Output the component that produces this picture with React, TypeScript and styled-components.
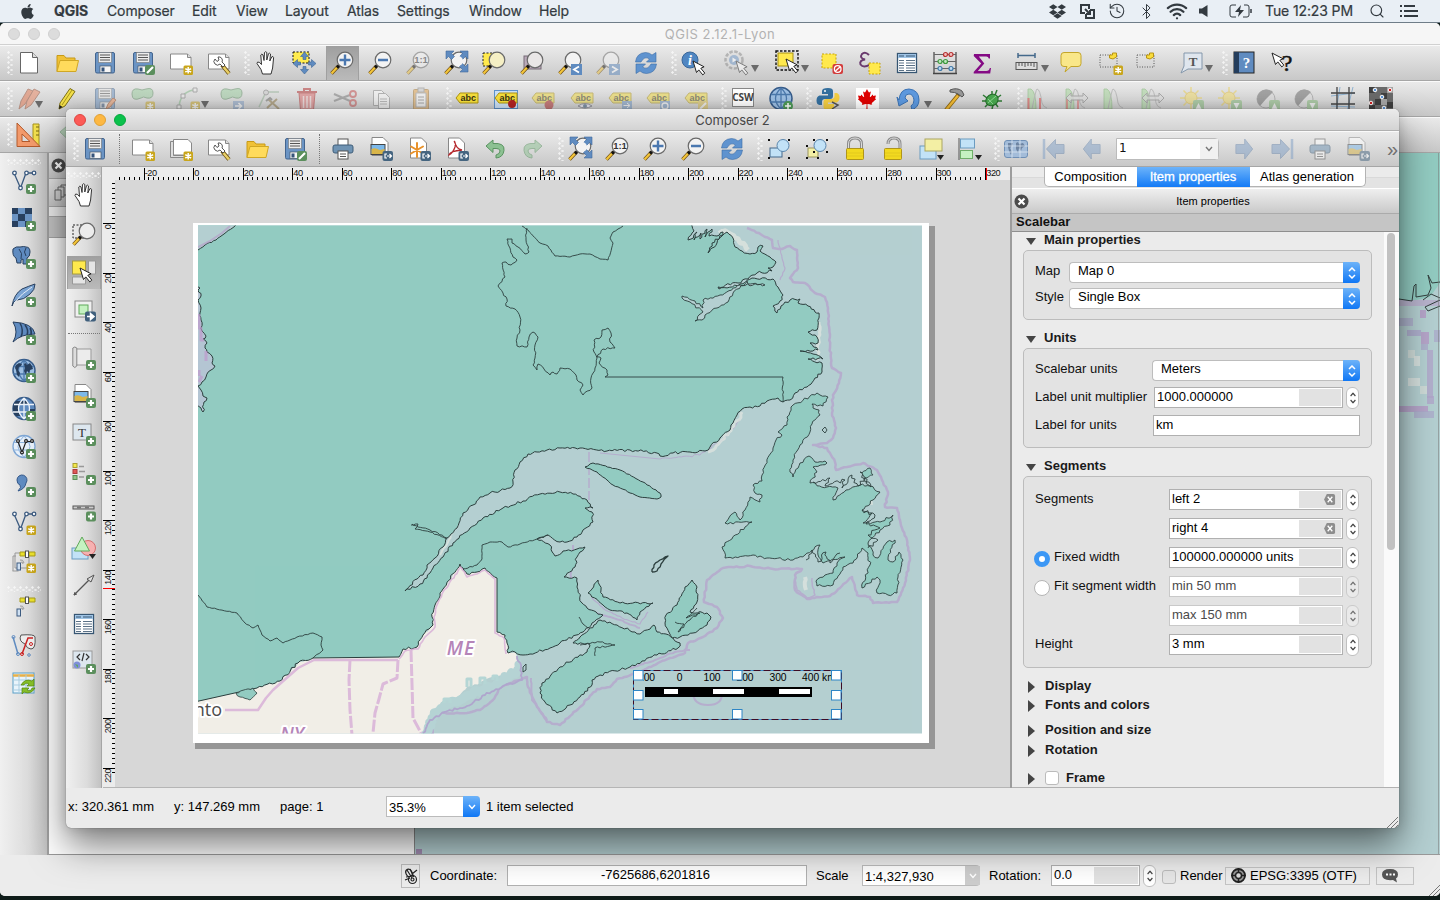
import React from "react";
import styled, { createGlobalStyle, css } from "styled-components";
import { FaApple, FaDropbox, FaCanadianMapleLeaf } from "react-icons/fa";
import { Bluetooth, History, Search, Wifi } from "lucide-react";

const Global = createGlobalStyle`
  * { box-sizing: border-box; }
  body {
    margin: 0;
    overflow: hidden;
    background: #0f1c19;
    font: 13px/16px "Liberation Sans", Arial, sans-serif;
    color: #111;
  }
  svg { display: block; }
`;

/* ---------- shared shapes used by the icons ---------- */

const PlusBadge = () => (
  <g>
    <rect x="14" y="14" width="10" height="10" rx="2" fill="#5b8f5d" />
    <path d="M19 16v6M16 19h6" stroke="#fff" strokeWidth="2.200" />
  </g>
);
const StarBadge = () => (
  <g>
    <rect x="14.500" y="14.500" width="9.500" height="9.500" rx="1.500" fill="#c9a61c" />
    <path d="M19.200 16v6.600M16.300 17.600l5.800 3.400M22.100 17.600l-5.800 3.400" stroke="#fff" strokeWidth="1.500" />
  </g>
);
const ArrowBadge = () => (
  <g>
    <rect x="13.500" y="14" width="10.500" height="10" rx="2" fill="#456580" />
    <path d="M18 17h-2v4h2M18 19h4M20.500 17l2 2l-2 2" stroke="#fff" strokeWidth="1.200" fill="none" />
  </g>
);
const Sheet = () => <path d="M3.500 1h11l5 5v15h-16z" fill="#fff" stroke="#888" />;
const WideSheet = () => (
  <g>
    <path d="M1.500 3h17l3.500 3.500v11.500h-20.500z" fill="#fff" stroke="#888" />
    <path d="M18.500 3v3.500h3.500" fill="#ddd" stroke="#888" />
  </g>
);
const Disk = () => (
  <g>
    <rect x="2.500" y="1.500" width="19" height="20.500" rx="1.500" fill="#6b94c4" stroke="#43658f" />
    <rect x="5.500" y="1.500" width="13" height="10" fill="#ececec" stroke="#777" strokeWidth=".6" />
    <path d="M7 4h10M7 6.500h10M7 9h10" stroke="#555" />
    <rect x="7" y="15" width="11" height="6.500" fill="#f5f5f5" stroke="#456" strokeWidth=".7" />
    <rect x="8.500" y="16.500" width="3" height="4" fill="#35537a" />
  </g>
);
const Lens = ({ fill = "#f3f3f3" }: { fill?: string }) => (
  <g>
    <path d="M1.500 22.500l7-7.500" stroke="#6b4b12" strokeWidth="3.400" />
    <path d="M1.500 22.500l6-6.500" stroke="#f3c53a" strokeWidth="2.200" />
    <path d="M7 16.800l2-2.200" stroke="#111" strokeWidth="3" />
    <circle cx="15" cy="9" r="7.800" fill={fill} stroke="#6a6a6a" strokeWidth="1.200" />
  </g>
);
const Folder = () => (
  <g>
    <path d="M2 20.500v-16h7l2 2.500h9v3" fill="#f0c136" stroke="#c79a17" />
    <path d="M2 20.500l3-11h18.500l-2.500 11z" fill="#ffdb5c" stroke="#d0a724" />
  </g>
);
const Wrench = () => (
  <g>
    <path d="M15 14l7 8.500" stroke="#6a5012" strokeWidth="4" />
    <path d="M16.500 16l5.500 6.500" stroke="#e8cf66" strokeWidth="2.500" />
    <path d="M8 8a3.500 3.500 0 0 0 5 5l3 3l2-2l-3-3a3.500 3.500 0 0 0-4-5l1 3l-2 1.500z" fill="#fff" stroke="#444" strokeWidth=".9" />
  </g>
);
const Cursor = ({ x = 10, y = 9 }: { x?: number; y?: number }) => (
  <path transform={`translate(${x} ${y})`} d="M0 0l3.500 11.500l2.300-2.600l4 5l2-1.800l-4-4.800l3.300-1.500z" fill="#fff" stroke="#222" />
);
const Hand = () => (
  <path
    d="M8.500 23L7 18.500L3 12.500q0-2.200 2.200-1.200L7.500 13.500L6.800 4q1-1.800 2.200 0l1 5.500l.5-8q1.200-1.600 2.300 0v7.500l1.700-6.300q1.300-1.200 2 .3l-.7 7l2-4.200q1.500-.8 1.800.8l-1 10.400L17 23z"
    fill="#fff"
    stroke="#333"
    strokeLinejoin="round"
  />
);
const Refresh = () => (
  <g fill="#5f93cf" stroke="#3b6ca6" strokeWidth=".6">
    <path d="M1.500 11q1-9 10-9.500q4 0 6.500 2.500l4-2.500v9.500h-9.500l3-3q-5-3.500-8.500 3z" />
    <path d="M22.500 13q-1 9-10 9.500q-4 0-6.500-2.500l-4 2.500v-9.500h9.500l-3 3q5 3.500 8.500-3z" />
  </g>
);
const Arrows4 = () => (
  <g fill="#5f8bc0" stroke="#40699b" strokeWidth=".6">
    <path d="M2 0h8l-2.500 2.500l3 3l-3 3l-3-3L2 8z" />
    <path d="M24 0h-8l2.500 2.500l-3 3l3 3l3-3L24 8z" />
    <path d="M24 21h-8l2.500-2.500l-3-3l3-3l3 3L24 13z" />
  </g>
);
const Globe = ({ dark = false }: { dark?: boolean }) => (
  <g fill="none">
    <circle cx="12" cy="11.500" r="11" fill={dark ? "#5f8bc0" : "#9dbfe3"} stroke="#375c8a" strokeWidth="1.500" />
    {dark && <path d="M1 12q0-6 3-8h5q-3 4-3 8zM23 12q0 6-4 8h-5q4-4 4-8zM9 4h6l2 4h-10zM6 12h-5q0 5 3 7h5q-3-3-3-7z" fill="#28405f" />}
    <path d="M2 7.500h20M1 15h22M12 1v21M12 1q-11 10.500 0 21M12 1q11 10.500 0 21" stroke={dark ? "#eef4fb" : "#4c79ac"} strokeWidth="1.300" />
  </g>
);
const Continents = () => (
  <g fill="#28405f">
    <path d="M4 6l3-2l3 1l-1 2l-2 1l-1 3l2 3l-1 4l-2-2l-1-5l-1-2zM12 5l2-1l1 2l3-2l2 3l1 3l-3 1l-1 3l-2-2l-1 4l-2-4l1-3z" />
  </g>
);
const Tag = () => (
  <g>
    <path d="M1 11l4-5h18v10h-18z" fill="#f6df3c" stroke="#b09512" />
    <text x="5.500" y="14.300" fontSize="9" fontWeight="700" fontFamily="Liberation Sans, sans-serif" fill="#3a3410">abc</text>
  </g>
);
const Blob = () => (
  <path d="M1 7q0-6 6-5q4 2 8 0q7-2 7 4q0 6-6 5q-4-2-6 0q-9 4-9-4z" fill="#9bcf9f" stroke="#5d8d62" />
);
const VNodes = () => (
  <g fill="#fff" stroke="#3c5b80" strokeWidth="1.300">
    <path d="M2 3l6.500 15l5.500-15h8" fill="none" />
    <circle cx="2.500" cy="3" r="1.800" />
    <circle cx="8.500" cy="18" r="1.800" />
    <circle cx="14.500" cy="3" r="1.800" />
    <circle cx="22" cy="3" r="1.800" />
  </g>
);
const PenFull = () => (
  <g>
    <path d="M4 22l1-6L15 1.500l5 3L10 19z" fill="#f4e04a" stroke="#7d7018" />
    <path d="M7 18L17 3" stroke="#a8961c" />
    <path d="M4 22l.6-4l3 2z" fill="#222" />
  </g>
);
const TableIcon = () => (
  <g>
    <rect x="2.500" y="2.500" width="19" height="19" fill="#fff" stroke="#375673" strokeWidth="1.300" />
    <rect x="3" y="3" width="18" height="4" fill="#9fc4e6" />
    <path d="M4 5h5M11 5h9" stroke="#375673" />
    <path d="M4 9.500h5M11 9.500h9M4 12h5M11 12h9M4 14.500h5M11 14.500h9M4 17h5M11 17h9M4 19.500h5M11 19.500h9" stroke="#5b7186" />
  </g>
);
const Picture = () => (
  <g>
    <path d="M3 .500h11l5 5v13h-16z" fill="#fff" stroke="#888" />
    <rect x="2" y="7.500" width="14" height="10" fill="#7db9ea" stroke="#444" />
    <path d="M2.500 12q4-2 8 1l5-1v5h-13z" fill="#d9b548" />
  </g>
);
const Printer = () => (
  <g stroke="#555">
    <rect x="7" y="2" width="10" height="8" fill="#fff" />
    <rect x="2" y="8" width="20" height="8" rx="2" fill="#6f93b3" stroke="#3f5d78" />
    <rect x="7" y="14" width="10" height="8" fill="#fff" />
    <path d="M9 17h6M9 19.500h6" />
  </g>
);
const Undo = () => <path d="M3 9l7-6v3.500q12-1 11 7q-1 7-8 7.500v-3q4-1 4-4q0-3-7-2.500v4z" fill="#8cc192" stroke="#5a9361" />;
const Lock = ({ open = false }: { open?: boolean }) => (
  <g>
    <path d={open ? "M7 7q0-6 6-6q6 0 6 6v4" : "M5.500 12v-5q0-6 6.500-6t6.500 6v5"} fill="none" stroke="#8a8a8a" strokeWidth="3" />
    <path d={open ? "M7 7q0-6 6-6q6 0 6 6v4" : "M5.500 12v-5q0-6 6.500-6t6.500 6v5"} fill="none" stroke="#ddd" strokeWidth="1" />
    <rect x="3.500" y="11.500" width="17" height="11" rx="1" fill="#f2d91f" stroke="#b0951a" />
    <path d="M4 16h16M4 19h16" stroke="#e3c91e" />
  </g>
);
const Handles = () => (
  <path d="M1 2h2v2h-2zM21 2h2v2h-2zM1 20h2v2h-2zM21 20h2v2h-2z" fill="#111" />
);
const Caret = () => <path d="M17 18h7l-3.500 5z" fill="#222" />;
const BlueArrow = () => <path d="M1 12l10-10v5.500h11v9h-11v5.500z" fill="#7f9fc6" stroke="#6684aa" />;
const Histogram = () => (
  <g>
    <path d="M1 22V2h3q5 3 5 20z" fill="#a7d99b" stroke="#6dae60" strokeWidth=".8" />
    <path d="M5 22q4-20 5-20q3 0 5 14q1 4 5 5" fill="none" stroke="#999" />
  </g>
);
const Sun = () => (
  <g>
    <path d="M11 0v22M0 11h22M3.500 3.500l15 15M18.500 3.500l-15 15" stroke="#eccf49" strokeWidth="1.500" />
    <circle cx="11" cy="11" r="6" fill="#f7de66" stroke="#e2bd3a" />
  </g>
);
const Contrast = () => (
  <g>
    <circle cx="10" cy="12" r="9" fill="#ddd" stroke="#888" />
    <path d="M10 12L17 5A9 9 0 1 0 4 19z" fill="#666" />
  </g>
);
const UpBadge = ({ down = false }: { down?: boolean }) => (
  <g>
    <rect x="13" y="13" width="11" height="11" rx="2" fill="#82bb76" />
    <path d={down ? "M15.500 16h6l-3 6z" : "M15.500 22h6l-3-6z"} fill="#fff" />
  </g>
);
const Satellite = () => (
  <g>
    <path d="M8 3h5v4h-5zM17 3h6v4h-6z" fill="#eae02c" stroke="#a79b1a" />
    <rect x="13.500" y="2" width="3" height="6.500" fill="#fff" stroke="#555" />
    <path d="M8 11q3-1 4 3M9 13q2 0 2 2" fill="none" stroke="#999" />
    <rect x="5" y="14" width="3.500" height="7" fill="#cfe0f2" stroke="#3c5b80" />
  </g>
);

const icons: Record<string, React.ReactNode> = {
  newFile: (<g><path d="M3.500 1.500h12l5 5v15.500h-17z" fill="#fff" stroke="#666" /><path d="M15.500 1.500v5h5" fill="#ddd" stroke="#666" /></g>),
  folder: <Folder />,
  disk: <Disk />,
  diskEdit: (<g><Disk /><rect x="14" y="14" width="10" height="10" rx="2" fill="#5b8f5d" /><path d="M16 22l6-6" stroke="#fff" strokeWidth="2.200" /></g>),
  newComposer: (<g><WideSheet /><StarBadge /></g>),
  dupComposer: (<g><path d="M1.500 4.500h3v14h15v2h-18z" fill="#ddd" stroke="#888" /><path d="M4.500 2.500h14.500l3.500 3.500v12h-18z" fill="#fff" stroke="#888" /><StarBadge /></g>),
  wrench: (<g><WideSheet /><Wrench /></g>),
  hand: <Hand />,
  panSelection: (
    <g><rect x="1" y="1" width="16" height="11" fill="#ffec4f" stroke="#111" strokeDasharray="2 1.500" />
      <g fill="#5f8bc0" stroke="#3c6595" strokeWidth=".6"><path d="M12.500 1l4 4.500h-2.500v3h-3v-3h-2.500zM12.500 23l4-4.500h-2.500v-3h-3v3h-2.500zM1 12.500l4.500-4v2.500h3v3h-3v2.500zM24 12.500l-4.500-4v2.500h-3v3h3v2.500z" /></g></g>
  ),
  zoomIn: (<g><Lens /><path d="M15 3.500v11M9.500 9h11" stroke="#4b78b0" strokeWidth="2.400" /></g>),
  zoomOut: (<g><Lens /><path d="M10 9h10" stroke="#4b78b0" strokeWidth="2.400" /></g>),
  zoom11: (<g><Lens /><text x="15" y="12.300" textAnchor="middle" fontSize="9.500" fontWeight="700" fontFamily="Liberation Sans, sans-serif" fill="#333">1:1</text></g>),
  zoomFull: (<g><Lens /><Arrows4 /><circle cx="14" cy="10" r="5" fill="#f3f3f3" /></g>),
  zoomSel: (<g><rect x="1" y="2" width="12" height="13" fill="#ffe94d" stroke="#222" strokeDasharray="2 1.500" /><Lens fill="#f5efc4" /></g>),
  zoomLayer: (<g><rect x="4" y="5" width="17" height="13" fill="#b9a9b9" stroke="#776b77" /><Lens fill="#e9e6e6" /></g>),
  zoomLast: (<g><Lens /><rect x="13" y="13" width="11" height="11" fill="#5f8bc0" /><path d="M21 15.500l-5 3l5 3" stroke="#fff" strokeWidth="1.800" fill="none" /></g>),
  zoomNext: (<g><Lens /><rect x="13" y="13" width="11" height="11" fill="#5f8bc0" /><path d="M16 15.500l5 3l-5 3" stroke="#fff" strokeWidth="1.800" fill="none" /></g>),
  zoomBox: (<g><rect x="1" y="3" width="13" height="13" fill="none" stroke="#222" strokeDasharray="2 1.500" /><Lens fill="#ececec" /></g>),
  refresh: <Refresh />,
  identify: (<g><circle cx="9" cy="9" r="8" fill="#4f86c2" stroke="#3a6799" /><text x="7" y="14" fontSize="14" fontStyle="italic" fontWeight="700" fontFamily="Liberation Serif, serif" fill="#fff">i</text><Cursor x={12} y={10} /></g>),
  action: (<g><circle cx="10" cy="9" r="8.500" fill="#ddd" stroke="#888" strokeDasharray="3.500 1.500" strokeWidth="2.500" /><circle cx="10" cy="9" r="5" fill="#6b94c4" /><path d="M8.500 6.500l4 2.500l-4 2.500z" fill="#fff" /><Cursor x={12} y={10} /></g>),
  select: (<g><rect x="0" y="0" width="22" height="19" fill="none" stroke="#111" strokeWidth="1.400" strokeDasharray="2.500 1.500" /><rect x="2" y="2" width="15" height="13" fill="#ffe94d" stroke="#a89210" /><Cursor x={10} y={8} /></g>),
  deselect: (<g><rect x="2" y="3" width="14" height="14" fill="#ffe94d" stroke="#c5a30f" strokeDasharray="2 1.500" /><rect x="12.500" y="13" width="10.500" height="10" rx="2" fill="#d33b3b" /><circle cx="17.700" cy="18" r="3.300" fill="none" stroke="#fff" strokeWidth="1.300" /><path d="M15.500 20l4.500-4" stroke="#fff" strokeWidth="1.300" /></g>),
  expression: (<g><path d="M11 4q-4-4-7-1q-3 4 3 5.500q-6 1-4.500 5q3 4 9.500 0" fill="none" stroke="#6a3a6e" strokeWidth="2" /><rect x="11" y="12" width="11" height="11" fill="#ffe94d" stroke="#c5a30f" strokeDasharray="2 1.500" /></g>),
  table: <TableIcon />,
  abacus: (
    <g fill="none"><path d="M1 1v21M23 1v21" stroke="#444" strokeWidth="1.200" /><path d="M0 22.500h24" stroke="#444" strokeWidth="1.600" /><path d="M1 3.500h22M1 10.500h22M1 17.500h22" stroke="#666" />
      <g strokeWidth="1.200"><circle cx="12.500" cy="3.500" r="2" fill="#f3bcbc" stroke="#b63030" /><circle cx="18" cy="3.500" r="2" fill="#f3bcbc" stroke="#b63030" /><circle cx="7" cy="10.500" r="2" fill="#bfe8bf" stroke="#3f9a3f" /><circle cx="12.500" cy="10.500" r="2" fill="#bfe8bf" stroke="#3f9a3f" /><circle cx="7" cy="17.500" r="2" fill="#bfdcf2" stroke="#3f78a8" /><circle cx="18" cy="17.500" r="2" fill="#bfdcf2" stroke="#3f78a8" /></g></g>
  ),
  sigma: <path d="M3 3h16v4.500h-1.200q-.5-2-2.500-2h-7.500l5.500 7l-6.500 7.500h8.500q3 0 3.500-3h1.200l-.8 5.500h-16.500v-1.500l7.500-8.500l-7.500-7.500z" fill="#840a84" />,
  measure: (<g><path d="M3 4.500h17M3 2v5M20 2v5" stroke="#44698b" strokeWidth="1.500" /><rect x="1" y="11.500" width="21" height="7" fill="#ddd" stroke="#555" /><path d="M4 12v3M7 12v3M10 12v4M13 12v3M16 12v3M19 12v4" stroke="#555" /></g>),
  tip: <path d="M5 1.500h14q3 0 3 3v8q0 3-3 3h-7l-6 5.500l2-5.500h-3q-3 0-3-3v-8q0-3 3-3z" fill="#f9e789" stroke="#c3a52a" />,
  bookmarkNew: (<g><rect x="1" y="4" width="17" height="12" fill="none" stroke="#555" strokeDasharray="1 1.500" /><path d="M10.500 4h3v-2h4v4l-3.500 2l-3.500-1z" fill="#f9dc3c" stroke="#b89414" /><StarBadge /></g>),
  bookmark: (<g><rect x="1" y="4" width="17" height="12" fill="none" stroke="#555" strokeDasharray="1 1.500" /><path d="M10.500 4h3v-2h4v4l-3.500 2l-3.500-1z" fill="#f9dc3c" stroke="#b89414" /></g>),
  textNote: (<g><path d="M5 2h18v16h-14l-7 4l3-7z" fill="#dfe6ee" stroke="#8497ab" /><text x="14" y="14.500" textAnchor="middle" fontSize="13" fontFamily="Liberation Serif, serif" fontWeight="700" fill="#555">T</text></g>),
  help: (<g><rect x="2" y="1" width="20" height="21" fill="#5f8bc0" stroke="#222" /><path d="M2 1h5v21h-5z" fill="#243d5c" /><text x="14.500" y="16.500" textAnchor="middle" fontSize="15" fontWeight="700" fontFamily="Liberation Serif, serif" fill="#fff">?</text></g>),
  whatsThis: (<g><Cursor x={3} y={2} /><text x="18" y="20" textAnchor="middle" fontSize="24" fontFamily="Liberation Serif, serif" fill="#111" stroke="#111" strokeWidth=".5">?</text></g>),
  pencils: (<g><path d="M1 22l2-8L10 2l5 2L7 17z" fill="#e0714a" stroke="#93492e" /><path d="M7 22l2-8L16 2l6 3L13 18z" fill="#e8835e" stroke="#93492e" /></g>),
  pencil: <PenFull />,
  diskPencil: (<g><Disk /><path d="M13 22l2-5l5-6l3 2l-6 7z" fill="#f0955f" stroke="#a34d1f" /></g>),
  blobStar: (<g><Blob /><StarBadge /></g>),
  nodeStar: (<g><path d="M3 22q0-16 14-19" fill="none" stroke="#7fb685" strokeWidth="1.500" /><path d="M1 18h4v4h-4zM5 7h4v4h-4zM17 1h4v4h-4z" fill="#eee" stroke="#777" /><StarBadge /></g>),
  blobArrow: (<g><Blob /><rect x="13" y="14" width="11" height="10" fill="#7d9cc4" /><path d="M15 19h6M18.500 16l3 3l-3 3" stroke="#fff" strokeWidth="1.500" fill="none" /></g>),
  nodeTool: (<g><path d="M1 20l7-15h13" fill="none" stroke="#8fae91" strokeWidth="1.500" /><circle cx="8" cy="5.500" r="2.500" fill="#ccc" stroke="#777" /><path d="M9 21l10-9M10 12l11 10" stroke="#8b7440" strokeWidth="2" /><path d="M8 14l4-3l2 2" stroke="#666" fill="none" strokeWidth="2" /></g>),
  trash: (<g stroke="#b02a2a"><path d="M4 6h16l-1.500 17h-13z" fill="#dd6c6c" /><path d="M2 5h20M9 4v-2h6v2" fill="none" strokeWidth="2" /><path d="M8.500 9v12M12 9v12M15.500 9v12" stroke="#f6d7d7" strokeWidth="1.500" /></g>),
  cut: (<g fill="none"><path d="M1 7l16 7M1 14l16-6" stroke="#777" strokeWidth="2" /><circle cx="20" cy="7" r="3" stroke="#c44c4c" strokeWidth="1.800" /><circle cx="20" cy="16" r="3" stroke="#c44c4c" strokeWidth="1.800" /></g>),
  copy: (<g><path d="M3.500 3.500h8l3 3v12h-11z" fill="#fff" stroke="#888" /><path d="M8.500 6.500h7l4 4v11h-11z" fill="#fff" stroke="#888" /><path d="M10 12h7M10 14.500h7M10 17h7" stroke="#999" /></g>),
  paste: (<g><rect x="4.500" y="2.500" width="15" height="20" rx="1" fill="#e4a44c" stroke="#a8772f" /><rect x="9" y="1" width="6" height="4" fill="#ccc" stroke="#888" /><path d="M7 6h10v14h-10z" fill="#fff" stroke="#999" /><path d="M9 10h6M9 13h6M9 16h6" stroke="#777" /></g>),
  tag: <Tag />,
  tagPinBox: (<g><rect x=".5" y="3.500" width="23" height="18" fill="#cde2f6" stroke="#5f93cc" /><Tag /><circle cx="18" cy="17" r="4" fill="#b32424" /></g>),
  tagPin: (<g><Tag /><circle cx="18" cy="18" r="4.500" fill="#b32424" /></g>),
  tagEye: (<g><Tag /><path d="M8 19q7-5 14 0q-7 4-14 0z" fill="#eef" stroke="#556" /><circle cx="15" cy="19" r="2" fill="#357" /></g>),
  tagMove: (<g><Tag /><rect x="14" y="14" width="10" height="10" fill="#6b94c4" /><path d="M15.500 18.500h6M19 16l3 2.500l-3 2.500" stroke="#fff" fill="none" /></g>),
  tagRotate: (<g><Tag /><rect x="14" y="14" width="10" height="10" fill="#6b94c4" /><circle cx="19" cy="19" r="3" fill="none" stroke="#fff" strokeWidth="1.300" /></g>),
  tagEdit: (<g><Tag /><rect x="14" y="14" width="10" height="10" fill="#e0c14a" /><path d="M16 22l6-6" stroke="#fff" strokeWidth="2" /></g>),
  csw: (<g><rect x="1.500" y="1.500" width="21" height="18" fill="#fff" stroke="#888" /><text x="12" y="13.500" textAnchor="middle" fontSize="10" fontWeight="700" fontFamily="Open Sans, sans-serif" fill="#444">CSW</text></g>),
  globePlus: (<g><Globe /><circle cx="19" cy="19" r="5" fill="#4f9a58" /><path d="M19 16v6M16 19h6" stroke="#fff" strokeWidth="1.500" /></g>),
  python: (<g><path d="M12 1q-6 0-6 3v3h6v1.500h-8.500q-3 1-3 5t3 4.500h2.500v-3q0-3 3-3h5q3 0 3-3v-5q0-3-5-3z" fill="#35709f" /><path d="M12 23q6 0 6-3v-3h-6v-1.500h8.500q3-1 3-5t-3-4.500h-2v3q0 3-3 3h-5q-3 0-3 3v5q0 3 4.500 3z" fill="#f5cf42" /><circle cx="9" cy="4" r="1" fill="#fff" /><path d="M16 15l6 3l-6 4" fill="none" stroke="#555" strokeWidth="1.500" /></g>),
  undoBlue: <path d="M2 13q1-11 10-11q10 1 10 11q0 7-7 10l-1-4q3-2 3-6q-1-6-5-6q-4 0-4 4l3 3l-9 5l-2-9z" fill="#5e9ae0" stroke="#3c74b6" />,
  hammer: (<g><path d="M5 23L18 7" stroke="#8a6410" strokeWidth="4" /><path d="M5 23L17 8.500" stroke="#f2bb35" strokeWidth="2.500" /><path d="M9 3q7-3 12 1l2 4l-2 2l-4-3q-3-2-8-2z" fill="#999" stroke="#555" /></g>),
  bug: (<g><path d="M3 8l4 3M2 14h4M5 20l3-3M12 4v3M17 3l-2 5M21 8l-4 3M22 14h-5M12 22l1-4M18 20l-3-4" stroke="#2f7c35" strokeWidth="1.500" /><ellipse cx="12" cy="13" rx="6.500" ry="5.500" fill="#49a94f" stroke="#236b29" transform="rotate(-35 12 13)" /><path d="M8 16l8-7M8 12l5 5" stroke="#8fdc93" /></g>),
  hist1: (<g><Histogram /><path d="M1.500 11v11M13 11v11" stroke="#e03c3c" strokeWidth="2" /></g>),
  hist2: (<g><Histogram /><path d="M2 12v10M13 12v10" stroke="#e03c3c" strokeWidth="1.500" /><path d="M1 11l5-5v3h12v-3l5 5l-5 5v-3h-12v3z" fill="#ddd" fillOpacity=".8" stroke="#777" /></g>),
  hist3: <Histogram />,
  hist4: (<g><Histogram /><path d="M1 11l5-5v3h12v-3l5 5l-5 5v-3h-12v3z" fill="#ddd" fillOpacity=".6" stroke="#777" /></g>),
  sunUp: (<g><Sun /><UpBadge /></g>),
  sunDown: (<g><Sun /><UpBadge down /></g>),
  contrastUp: (<g><Contrast /><UpBadge /></g>),
  contrastDown: (<g><Contrast /><UpBadge down /></g>),
  fence: (<g><path d="M9 0q-2 12-4 24M22 0q-3 12-6 24M0 9l24-3M0 19l24 1" stroke="#8fb2d0" strokeWidth="1" /><path d="M6 0v24M18 0v24M0 6h24M0 17h24" stroke="#444" strokeWidth="1.300" /></g>),
  georef: (<g><rect width="24" height="24" fill="#6a6a6a" /><path d="M0 0h6v6h-6zM12 6h6v6h-6zM6 12h6v6h-6zM0 18h6v6h-6zM18 15h6v6h-6z" fill="#3f3f3f" /><path d="M12 12h6v6h-6zM18 0h6v6h-6z" fill="#a5a5a5" /><g stroke="#fff"><circle cx="6" cy="3" r="1.800" fill="#5d94d6" /><circle cx="21" cy="3" r="1.800" fill="#c22" /><circle cx="13" cy="10" r="1.800" fill="#5d94d6" /><circle cx="2" cy="16" r="1.800" fill="#c22" /><circle cx="15" cy="21" r="1.800" fill="#5d94d6" /></g></g>),
  ruler: (<g><path d="M17 1h6v22h-6z" fill="#f3e04f" stroke="#a8931c" /><path d="M20 4h3M20 8h3M20 12h3" stroke="#776712" /><path d="M1 0L24 23.500H1z" fill="#f39a6b" stroke="#b35a2c" /><path d="M6 11l8 7.500h-8z" fill="#ddd" stroke="#b35a2c" /></g>),
  undo: <Undo />,
  redo: <g transform="translate(24 0) scale(-1 1)"><Undo /></g>,
  printer: <Printer />,
  exportImg: (<g><Picture /><ArrowBadge /></g>),
  exportSvg: (<g><Sheet /><path d="M10 6v14M4 9.500l12 7M16 9.500l-12 7" stroke="#e8922c" strokeWidth="2" strokeLinecap="round" /><ArrowBadge /></g>),
  exportPdf: (<g><Sheet /><path d="M9 4q2 2 1 6q-2 6-6 8q1-4 13-5q-6-1-7.500-9" fill="none" stroke="#b5282d" strokeWidth="1.300" /><ArrowBadge /></g>),
  group: (<g><rect x="3" y="11" width="12" height="9" fill="#c2e2f7" stroke="#44698b" /><circle cx="16" cy="8.500" r="6" fill="#c2e2f7" stroke="#5a86ad" /><Handles /></g>),
  ungroup: (<g><rect x="3" y="11" width="10" height="9" fill="#f3efa4" stroke="#9b9660" /><circle cx="15" cy="8.500" r="6" fill="#c2e2f7" stroke="#5a86ad" /><path d="M1 8h2v2h-2zM1 20h2v2h-2zM12 20h2v2h-2zM8 2h2v2h-2zM21 2h2v2h-2zM21 14h2v2h-2zM8 14h2v2h-2z" fill="#111" /></g>),
  lock: <Lock />,
  unlock: <Lock open />,
  raise: (<g><rect x="0" y="9" width="16" height="13" fill="#c2e2f7" stroke="#6b9bc0" /><rect x="5" y="2" width="17" height="12" fill="#f3efa4" stroke="#aba661" /><Caret /></g>),
  align: (<g><path d="M1 1v22" stroke="#555" /><rect x="2.500" y="2" width="14" height="9" fill="#c2e2f7" stroke="#6b9bc0" /><rect x="2.500" y="13.500" width="12" height="8" fill="#c5f2c1" stroke="#6fae69" /><Caret /></g>),
  worldmap: (<g><rect x=".5" y="3.500" width="23" height="17" rx="2.500" fill="#a3bcd9" stroke="#6f8fb5" /><path d="M4 6h5l-1 3l-2 2l1 2l1 2l-1 3l-2-4l-1-4zM12 6l2-1l1 2l4-1l2 3l-3 2l-1 3l-2-3l-1 5l-2-4z" fill="#6d84a2" /><path d="M0 9h24M0 15h24M8 3v18M16 3v18" stroke="#dce7f3" strokeWidth=".8" /></g>),
  first: (<g><path d="M2 2v20" stroke="#7f9fc6" strokeWidth="2.500" /><path d="M4.500 12l9-9.500v5h8.500v9h-8.500v5z" fill="#7f9fc6" stroke="#6684aa" /></g>),
  prev: <g transform="translate(2.500 0) scale(.8 1)"><BlueArrow /></g>,
  next: <g transform="translate(21.500 0) scale(-.8 1)"><BlueArrow /></g>,
  last: (<g transform="translate(24 0) scale(-1 1)"><path d="M2 2v20" stroke="#7f9fc6" strokeWidth="2.500" /><path d="M4.500 12l9-9.500v5h8.500v9h-8.500v5z" fill="#7f9fc6" stroke="#6684aa" /></g>),
  vector: (<g><VNodes /><PlusBadge /></g>),
  raster: (<g><rect y="1" width="20" height="19" fill="#6b94c4" /><path d="M0 1h6v6h-6zM13 1h7v6h-7zM6 7h7v7h-7zM0 14h6v6h-6zM13 14h7v6h-7z" fill="#28405f" /><PlusBadge /></g>),
  postgis: (<g><path d="M1 4q3-3 7-2q4-1 6 0q4 0 4 5q0 5-3 6v6h-4v-5l-2 1v3h-4l-1-5q-4-2-3-9z" fill="#5f8bc0" stroke="#28405f" /><path d="M7 4q4 4 2 10M14 3q-3 4 0 8" stroke="#28405f" fill="none" /><PlusBadge /></g>),
  feather: (<g><path d="M0 23q2-12 10-17q7-3 13-5q0 6-5 10q-6 6-13 6q-4 1-5 6z" fill="#7ba4d3" stroke="#28405f" /><path d="M2 20Q10 10 20 4" stroke="#e3edf7" fill="none" /><PlusBadge /></g>),
  mssql: (<g><path d="M1 1q20 1 22 12q-14 0-22 8q6-10 0-20z" fill="#5f8bc0" stroke="#28405f" /><path d="M8 2q4 7 1 14M13 4q4 5 2 10M18 7q2 3 1 7" stroke="#28405f" strokeWidth="1.500" fill="none" /><PlusBadge /></g>),
  wms: (<g><Globe /><Continents /><PlusBadge /></g>),
  wcs: (<g><Globe dark /><PlusBadge /></g>),
  wfs: (<g><circle cx="12" cy="11.500" r="11" fill="#e7f0fa" stroke="#7ea6d4" strokeWidth="1.300" /><path d="M2 7.500h20M1 15h22M12 1q-12 10.500 0 21M12 1q12 10.500 0 21" stroke="#8fb4dd" fill="none" /><g fill="#fff" stroke="#222" strokeWidth="1.200"><path d="M6 6.500l4 11l4-11h6" fill="none" /><circle cx="6" cy="6" r="1.400" /><circle cx="10" cy="17.500" r="1.400" /><circle cx="14" cy="6" r="1.400" /><circle cx="20" cy="6" r="1.400" /></g><PlusBadge /></g>),
  comma: (<g><path d="M5 7a5 5 0 1 1 9 3q-1 6-8 8q4-4 2-6q-3-1-3-5z" fill="#5f8bc0" stroke="#35598a" /><PlusBadge /></g>),
  vectorNew: (<g><VNodes /><StarBadge /></g>),
  gpxNew: (<g><path d="M1 22v-15h3M.5 22h6" stroke="#999" fill="none" /><path d="M3 4h14v15h-14z" fill="none" stroke="#999" /><Satellite /><StarBadge /></g>),
  gpx: <Satellite />,
  topology: (<g fill="none"><path d="M1 3l5 17" stroke="#5f8bc0" strokeWidth="1.500" /><circle cx="1.500" cy="3" r="1.500" stroke="#5f8bc0" /><circle cx="6" cy="20" r="1.500" stroke="#5f8bc0" /><path d="M9 1q14-1 14 2q1 12-4 12q-4 0-6-5q-7-3-4-9z" fill="#eee" stroke="#555" /><path d="M10 20l6-16h5" stroke="#c22" strokeWidth="1.500" /><circle cx="10" cy="20" r="1.500" stroke="#c22" /><circle cx="19" cy="10" r="1.500" stroke="#c22" /><circle cx="17" cy="21" r="1.300" stroke="#5f8bc0" /></g>),
  tableRefresh: (<g><rect x="1" y="1" width="21" height="20" fill="#e9f4fb" stroke="#5aa0c8" /><path d="M1 3.500h21" stroke="#e7b048" strokeWidth="2.500" /><path d="M1 8h21M1 13h21M1 18h21M7 3v18M14 3v18" stroke="#a9cde0" /><path d="M9 13q4-7 11-4l2-2v7h-7l2-2q-4-2-5 1zM23 16q-4 7-11 4l-2 2v-6h7l-2 2q4 2 5-2z" fill="#86bf29" stroke="#54850e" strokeWidth=".7" /></g>),
  selectItem: (<g><rect x="0.500" y="1" width="13" height="13" fill="#ffe94d" stroke="#a89c3c" /><path d="M16.500 1h7v13h-7zM.5 17h13v7h-13z" fill="#e4e4e4" stroke="#999" /><Cursor x={8} y={8} /></g>),
  moveContent: (<g><rect x="3" y="2" width="17" height="16" fill="#f0f0f0" stroke="#888" /><rect x="7" y="6" width="9" height="9" fill="#c5f2c1" stroke="#5fa85a" /><rect x="13" y="12.500" width="11" height="10" rx="2" fill="#3f5f7c" /><path d="M15 17.500h5M18.500 14.500l3.500 3l-3.500 3z" stroke="#fff" strokeWidth="1.500" fill="#fff" /></g>),
  addMap: (<g><path d="M3 3h16v16h-16z" fill="#ececec" stroke="#999" /><path d="M.8 2q2-2 4 0v18q-2 3-4 0z" fill="#ddd" stroke="#888" /><PlusBadge /></g>),
  addImage: (<g><Picture /><PlusBadge /></g>),
  addLabel: (<g><rect x="1" y="2" width="18" height="16" fill="#dde7ef" stroke="#888" /><text x="10" y="14.500" textAnchor="middle" fontSize="13" fontFamily="Liberation Serif, serif" fill="#333">T</text><PlusBadge /></g>),
  addLegend: (<g><rect x="1" y="1.500" width="4" height="4" fill="#f3e94b" stroke="#aaa032" /><rect x="1" y="7.500" width="4" height="4" fill="#e05757" stroke="#aa3a3a" /><rect x="1" y="13.500" width="4" height="4" fill="#8fc48a" stroke="#5c8e57" /><path d="M7 4.500h5M7 9.500h6M7 15h5" stroke="#999" strokeWidth="1.500" /><g transform="translate(0 -1)"><PlusBadge /></g></g>),
  addScale: (<g><rect x="1" y="8" width="21" height="3" fill="#ccc" stroke="#555" /><path d="M5 9.500h4M13 9.500h4" stroke="#777" strokeWidth="2" /><g transform="translate(0 -.5)"><PlusBadge /></g></g>),
  addShape: (<g><rect x="0" y="12" width="16" height="11" fill="#c2e2f7" stroke="#6b9bc0" /><circle cx="16" cy="12" r="7.500" fill="#f6b1b1" stroke="#d46f6f" /><path d="M10 1l7.500 14h-15z" fill="#c5f2c1" stroke="#5fa85a" /><Caret /></g>),
  addArrow: (<g><path d="M2 22L18 6" stroke="#555" strokeWidth="1.300" /><path d="M22 2l-3 7l-4-3z" fill="#ddd" stroke="#555" /><path d="M2 22l3-1M2 22l1-3" stroke="#555" /></g>),
  addHtml: (<g><rect x="1" y="1" width="19" height="17" fill="#dde7ef" stroke="#999" /><path d="M8 4l-3 3l3 3M14 4l3 3l-3 3M12 3l-2 8" stroke="#333" strokeWidth="1.200" fill="none" /><circle cx="5" cy="15" r="3.500" fill="#7f8fd8" /><path d="M3 14l3 1v3z" fill="#5fa85a" /><PlusBadge /></g>),
};

/* ---------- icon strips ---------- */

type Item = [name: string, at: number, opts?: { faded?: boolean; active?: boolean }];

const Strip = styled.div<{ $vertical?: boolean }>`
  display: flex;
  flex: none;
  align-items: center;
  ${(p) =>
    p.$vertical
      ? css`
          flex-direction: column;
          width: 36px;
          background: linear-gradient(90deg, #f0f0f0, #dcdcdc 60%, #c2c2c2);
          border-right: 1px solid #a5a5a5;
        `
      : css`
          height: 36px;
          background: linear-gradient(#eaeaea, #c8c8c8);
          border-top: 1px solid #fafafa;
          border-bottom: 1px solid #a6a6a6;
        `}
`;
const Slot = styled.div<{ $gap: number; $size: number; $vertical?: boolean; $faded?: boolean; $active?: boolean }>`
  flex: none;
  display: flex;
  align-items: center;
  justify-content: center;
  ${(p) =>
    p.$vertical
      ? css`margin-top: ${p.$gap}px; height: ${p.$size}px; width: 34px;`
      : css`margin-left: ${p.$gap}px; width: ${p.$size}px; height: 34px;`}
  ${(p) => p.$faded && css`svg { opacity: 0.5; }`}
  ${(p) =>
    p.$active &&
    css`
      background: linear-gradient(#9f9f9f, #bababa);
      border-left: 1px solid #a0a0a0;
      border-right: 1px solid #a0a0a0;
    `}
`;
const Grip = styled.div<{ $vertical?: boolean }>`
  width: ${(p) => (p.$vertical ? 34 : 6)}px;
  height: ${(p) => (p.$vertical ? 6 : 24)}px;
  background-image: radial-gradient(circle at 1.500px 1.500px, #fafafa 0.900px, transparent 1.500px),
    radial-gradient(circle at 4.500px 4px, #f5f5f5 0.900px, transparent 1.500px);
  background-size: 6px 5px;
  opacity: 0.8;
`;
const Divider = styled.div<{ $vertical?: boolean }>`
  ${(p) =>
    p.$vertical
      ? css`width: 32px; border-top: 1px dotted #777;`
      : css`height: 30px; border-left: 1px dotted #777;`}
`;
const DropMark = styled.div`
  border: 4px solid transparent;
  border-top: 7px solid #6a6a6a;
  border-bottom: 0;
  margin-top: 10px;
`;
const LeafTile = styled.div`
  width: 23px;
  height: 23px;
  flex: none;
  display: flex;
  align-items: center;
  justify-content: center;
  background: #fff;
  color: #e00000;
`;

const sizeOf = (name: string, active?: boolean) =>
  name === "grip" ? 6 : name === "sep" ? 2 : name === "drop" ? 8 : active ? 33 : 24;

// Items carry the centre at which they sit; the space before each one follows from its neighbour.
function Icons({ items, start, vertical }: { items: Item[]; start: number; vertical?: boolean }) {
  let cursor = start;
  return (
    <>
      {items.map(([name, at, opts], i) => {
        const size = sizeOf(name, opts?.active);
        const gap = at - size / 2 - cursor;
        cursor = at + size / 2;
        return (
          <Slot key={i} $gap={gap} $size={size} $vertical={vertical} $faded={opts?.faded} $active={opts?.active}>
            {name === "grip" ? (
              <Grip $vertical={vertical} />
            ) : name === "sep" ? (
              <Divider $vertical={vertical} />
            ) : name === "drop" ? (
              <DropMark />
            ) : name === "leaf" ? (
              <LeafTile><FaCanadianMapleLeaf size={20} /></LeafTile>
            ) : (
              <svg width="24" height="24" viewBox="0 0 24 24" overflow="visible">{icons[name]}</svg>
            )}
          </Slot>
        );
      })}
    </>
  );
}

const F = { faded: true };
const row1: Item[] = [
  ["grip", 10], ["newFile", 29], ["folder", 67], ["disk", 105], ["diskEdit", 143], ["newComposer", 181], ["wrench", 219],
  ["grip", 247], ["hand", 266], ["panSelection", 304], ["zoomIn", 342, { active: true }], ["zoomOut", 380], ["zoom11", 418, F],
  ["zoomFull", 456], ["zoomSel", 494], ["zoomLayer", 532], ["zoomLast", 570], ["zoomNext", 608, F], ["refresh", 646],
  ["grip", 674], ["identify", 693], ["action", 736, F], ["drop", 755], ["select", 788], ["drop", 805], ["deselect", 832],
  ["expression", 870], ["table", 907], ["abacus", 945], ["sigma", 983], ["measure", 1027], ["drop", 1045], ["tip", 1071],
  ["bookmarkNew", 1111], ["bookmark", 1148], ["textNote", 1191], ["drop", 1209], ["grip", 1225], ["help", 1244], ["whatsThis", 1281],
];
const row2: Item[] = [
  ["grip", 10], ["pencils", 30, F], ["drop", 39, F], ["pencil", 67], ["diskPencil", 105, F], ["blobStar", 143, F], ["nodeStar", 188, F],
  ["drop", 205], ["blobArrow", 232, F], ["nodeTool", 270, F], ["trash", 307, F], ["cut", 345, F], ["copy", 382, F], ["paste", 421, F],
  ["grip", 449], ["tag", 467], ["tagPinBox", 506], ["tagPin", 543, F], ["tagEye", 582, F], ["tagMove", 620, F], ["tagRotate", 658, F],
  ["tagEdit", 696, F], ["grip", 724], ["csw", 743], ["globePlus", 781], ["grip", 809], ["python", 828], ["leaf", 867],
  ["undoBlue", 909], ["drop", 928], ["hammer", 953], ["bug", 992], ["grip", 1020], ["hist1", 1039, F], ["hist2", 1077, F],
  ["hist3", 1115, F], ["hist4", 1153, F], ["sunUp", 1192, F], ["sunDown", 1230, F], ["contrastUp", 1268, F], ["contrastDown", 1306, F],
  ["fence", 1343], ["georef", 1381],
];
const row3: Item[] = [["grip", 10], ["ruler", 28], ["undo", 69, F]];
const leftBar: Item[] = [
  ["grip", 162], ["vector", 182], ["raster", 219], ["postgis", 257], ["feather", 295], ["mssql", 333], ["wms", 371], ["wcs", 409],
  ["wfs", 447], ["comma", 485], ["vectorNew", 523], ["gpxNew", 561], ["grip", 589], ["gpx", 607], ["topology", 646], ["tableRefresh", 684],
];
const compTop: Item[] = [
  ["grip", 76], ["disk", 95], ["sep", 119], ["newComposer", 143], ["dupComposer", 181], ["wrench", 219], ["folder", 257], ["diskEdit", 295],
  ["sep", 319], ["printer", 343], ["exportImg", 381], ["exportSvg", 419], ["exportPdf", 457], ["undo", 495], ["redo", 533, F],
  ["grip", 561], ["zoomFull", 580], ["zoom11", 617], ["zoomIn", 655], ["zoomOut", 693], ["refresh", 732], ["grip", 760],
  ["group", 779], ["ungroup", 817], ["lock", 855], ["unlock", 893], ["raise", 932], ["align", 970], ["grip", 997],
  ["worldmap", 1016], ["first", 1054, F], ["prev", 1092, F],
];
const compTopEnd: Item[] = [["next", 1244, F], ["last", 1282, F], ["printer", 1320, F], ["exportImg", 1358, F]];
const compLeft: Item[] = [
  ["grip", 175], ["hand", 195], ["zoomBox", 234], ["selectItem", 272, { active: true }], ["moveContent", 311], ["sep", 333],
  ["addMap", 358], ["addImage", 396], ["addLabel", 434], ["addLegend", 474], ["addScale", 510], ["addShape", 548], ["addArrow", 585],
  ["table", 624], ["addHtml", 662],
];

/* ---------- map drawing ---------- */

type Pt = [number, number];
const parse = (s: string): Pt[] => s.trim().split(/\s+/).map((p) => p.split(",").map(Number) as Pt);

// Breaks short segments into uneven steps so that shores look ragged; long borders stay straight.
function shore(s: string, amp = 1.3, close = true) {
  const pts = parse(s);
  let seed = pts.length * 7919 + Math.round(pts[0][0]);
  const rnd = () => ((seed = (seed * 1103515245 + 12345) % 2147483648) / 2147483648) * 2 - 1;
  let d = `M${pts[0][0]} ${pts[0][1]}`;
  const n = close ? pts.length : pts.length - 1;
  for (let i = 0; i < n; i++) {
    const [x1, y1] = pts[i];
    const [x2, y2] = pts[(i + 1) % pts.length];
    const len = Math.hypot(x2 - x1, y2 - y1);
    if (len > 4 && len < 50) {
      const k = Math.max(2, Math.round(len / 2.6));
      for (let j = 1; j < k; j++) {
        const o = rnd() * amp;
        const t = j / k;
        d += `L${(x1 + (x2 - x1) * t - ((y2 - y1) / len) * o).toFixed(1)} ${(y1 + (y2 - y1) * t + ((x2 - x1) / len) * o).toFixed(1)}`;
      }
    }
    d += `L${x2} ${y2}`;
  }
  return close ? d + "Z" : d;
}

const canada =
  "190,215 693,215 692,226 694,231 688,240 691,239 697,232 694,240 701,233 700,239 707,229 705,237 712,229 709,236 717,236 723,232 717,243 712,248 708,253 712,243 722,236 727,232 733,238 735,247 742,251 750,254 757,252 758,247 763,246 760,251 770,257 776,262 773,267 768,268 772,271 757,273 748,279 738,283 718,287 719,289 740,284 752,278 773,279 778,287 783,295 780,301 773,306 777,313 781,306 790,300 800,299 798,303 808,306 815,312 819,313 819,318 817,330 808,332 817,337 818,343 810,343 818,350 800,351 813,354 823,359 808,359 822,363 822,372 815,378 807,387 795,393 790,400 783,402 778,398 767,401 760,406 750,407 742,409 737,415 733,423 730,430 720,438 710,447 705,451 690,452 673,453 660,456 657,453 630,450 607,451 580,448 560,448 547,450 537,452 528,454 520,462 515,470 513,482 510,488 490,493 480,497 473,505 463,513 457,528 447,538 443,547 435,558 427,565 423,575 417,579 405,591 420,584 427,578 433,568 443,557 453,543 470,528 483,518 503,508 523,501 540,494 560,492 573,494 587,500 593,508 585,508 592,512 593,522 583,530 577,537 567,542 560,542 548,535 537,539 550,545 555,556 563,551 577,549 585,547 580,552 577,557 575,567 564,577 577,578 577,587 582,603 587,608 603,615 592,623 583,632 560,643 550,648 530,654 523,655 515,652 508,653 507,643 505,635 497,632 497,578 485,568 477,572 467,574 463,568 460,564 440,593 435,605 432,617 433,625 423,635 417,647 403,649 399,657 313,658 298,663 280,681 257,688 190,703";
const us =
  "190,703 257,688 280,681 298,663 313,658 399,657 403,649 417,647 423,635 433,625 432,617 435,605 440,593 460,564 463,568 467,574 477,572 485,568 497,578 497,632 505,635 507,643 508,653 515,652 518,662 518,670 505,675 492,677 480,683 467,687 457,697 443,701 436,709 430,717 425,725 420,740 190,740";
const newfoundland =
  "817,393 793,405 787,417 787,425 778,432 782,435 776,440 773,448 762,475 762,481 753,485 755,493 762,495 760,502 750,497 745,510 740,520 735,512 725,523 752,522 745,527 722,547 725,558 753,555 767,558 793,560 805,555 820,545 818,555 823,563 845,557 837,563 833,573 825,575 816,581 817,586 833,585 843,567 853,563 862,548 868,553 870,565 862,588 877,577 880,580 877,593 888,595 897,593 898,577 903,560 899,552 893,562 888,560 895,540 887,542 878,558 873,555 868,543 880,530 890,525 893,515 880,522 863,523 872,513 862,510 873,500 880,492 870,486 860,485 846,490 833,500 838,488 827,487 810,483 817,472 813,467 827,463 825,461 815,462 809,456 800,463 793,477 790,472 793,460 800,445 810,432 812,424 820,415 819,410 813,408 812,404 823,406 828,397 820,395";
const quebecLine =
  "527,228 526,240 529,252 525,254 518,247 512,243 512,239 507,239 510,248 513,257 517,260 511,265 506,262 502,263 505,277 498,286 503,293 507,299 506,306 515,309 520,317 520,330 517,338 517,346 527,347 529,337 533,332 538,337 535,345 535,358 533,365 537,370 538,364 544,369 550,375 553,372 557,374 560,368 570,369 576,375 577,380 583,385 580,390 583,395 592,388 591,378 595,368 597,358 594,352 594,340 601,337 602,330 608,328 611,333 610,342 615,348 603,349 597,357 601,358 599,363 607,370 608,375 605,377 783,377 783,402";
const maritimeLine =
  "747,228 772,240 773,248 782,249 790,246 797,250 798,268 790,278 793,282 805,283 815,293 825,297 828,308 830,348 832,368 841,373 839,383 833,395 832,413 836,428 833,438 827,443 813,445 827,448 835,462 836,470 847,467 863,463 877,470 883,482 888,492 885,507 897,508 902,528 907,540 910,560 905,583 897,602 873,603 870,597 857,595 852,577 840,588 830,596 807,599 795,590 795,575 802,569 773,569 750,566 723,568 707,580 704,602 717,607 723,618 717,628 703,637 688,643 685,653 660,662 640,672 617,679 610,687 597,689 580,707 560,725 547,722 537,707 528,687 527,677 500,687 493,700 480,710 467,713 437,713 433,727 432,740";

function PrintMap() {
  const land = "#92cbc1";
  const ink = "#2c3f3e";
  return (
    <g>
      <clipPath id="frame"><rect x="198" y="225.500" width="724" height="508" /></clipPath>
      <g clipPath="url(#frame)" strokeLinejoin="round">
        <rect x="198" y="225" width="724" height="509" fill="#b4cfd1" />
        <g fill="none" stroke="#b6a8cd" strokeWidth="2" opacity=".85">
          <path d={shore(maritimeLine, 0.7, false)} strokeWidth="2.500" />
          <path d="M589 452v48" strokeDasharray="10 3" strokeWidth="1.500" />
          <path d={shore("740,420 722,440 700,455 660,459 600,453", 1, false)} strokeWidth="1" />
          <path d={shore("795,580 797,590 807,598 815,595 813,588 812,578", 0.6, false)} strokeWidth="1.500" />
          <path d={shore("690,650 675,652 655,660 630,668", 0.6, false)} />
          <path d={shore("573,545 570,570 576,600 590,612 620,620 640,628", 0.6, false)} />
          <path d="M693 692q0 13 15 13t14-13" />
          <path d={shore("547,720 532,700 531,678", 0.5, false)} />
          <path d={shore("600,590 592,598 604,609 622,618 640,624 648,612", 0.5, false)} strokeWidth="1.200" />
          <path d={shore("778,240 782,258 785,268 780,280", 0.5, false)} strokeWidth="1.200" />
        </g>
        <g fill="none" stroke="#dde3df" strokeWidth="4" opacity=".8">
          <path d={shore("720,230 735,238 748,250", 2, false)} strokeWidth="5" />
          <path d={shore("819,322 818,360", 1.5, false)} strokeWidth="3" />
          <path d={shore("742,412 734,426 722,440 708,452", 2, false)} strokeWidth="3" />
          <path d={shore("805,577 806,590", 1, false)} strokeWidth="4" />
          <path d={shore("868,495 870,505", 1, false)} strokeWidth="6" />
          <path d={shore("460,520 440,555", 1, false)} strokeWidth="2" />
        </g>
        <path d={shore(us, 0.8)} fill="#f1eee7" />
        <path d={shore("425,737 432,718 445,705 465,697 490,687 517,672 522,664", 2.2, false)} fill="none" stroke="#b5d3d4" strokeWidth="9" />
        <path d="M467 687v-8h4v8M480 684v-6h5v6M493 680v-4h4v5M444 703v-4h6v4" stroke="#b5d6d5" strokeWidth="3" fill="none" />
        <g fill="none" stroke="#b0a6cd" strokeWidth="1.800">
          <path d={shore("423,733 430,720 445,712 467,706 485,695 505,685 522,680 521,668 517,656", 1.2, false)} />
        </g>
        <path d={shore(canada)} fill={land} stroke={ink} />
        <path d={shore("190,215 240,215 235,226 224,234 216,240 205,245 198,250 190,250", 0.5)} fill="#b4cfd1" stroke={ink} />
        <path d="M198 247l12-6 12-8 8-7" fill="none" stroke="#b597c6" strokeWidth="2" opacity=".6" />
        <path d={shore("190,286 200,288 198,290 201,296 198,300 201,308 200,313 201,320 202,331 206,336 203,339 207,343 205,348 207,352 212,356 212,363 215,366 211,370 206,377 202,382 198,386 201,390 203,396 207,398 204,402 203,412 201,408 190,400")} fill="#b4c5d3" stroke={ink} />
        <path d="M199 314v14h2v12h3M206 351v10M199 370v6M202 376l-3 6" fill="none" stroke="#be95cb" strokeWidth="3" opacity=".65" />
        <path d={shore("747,281 733,293 728,302 717,308 705,315 702,320 695,321 703,312 690,302 682,298 682,296 695,301 703,308 703,300 720,295 740,285 765,285 748,284")} fill="#b4cfd1" stroke={ink} strokeWidth=".9" />
        <path d={shore(newfoundland)} fill={land} stroke={ink} strokeWidth=".9" />
        <path d={shore("585,467 593,463 620,470 643,482 660,493 661,497 657,499 640,497 613,485 607,480 597,472", 0.5)} fill={land} stroke={ink} />
        <path d={shore("598,580 588,593 603,605 610,610 627,613 637,620 640,612 653,603 620,603 603,597 601,590", 1)} fill={land} stroke={ink} />
        <path d={shore("600,620 617,625 640,634 654,625 657,632 666,634 673,638 680,643 678,648 657,655 630,667 600,675 592,680 592,685 580,697 570,705 557,713 545,702 540,693 542,683 560,667 587,652 590,645 573,643 580,637")} fill={land} stroke={ink} />
        <path d={shore("692,580 697,587 697,602 690,612 707,613 711,617 707,625 693,633 680,637 672,638 665,623 666,615 677,605 685,587", 1)} fill={land} stroke={ink} />
        <g fill="none" stroke={ink} strokeWidth=".9">
          <path d={shore(quebecLine, 0.9, false)} />
          <path d={shore("522,226 528,230 540,243 548,246 555,256 570,257 580,254 590,254 600,259 608,260 613,243 610,238 613,232 623,226", 0.5, false)} />
          <path d={shore("463,569 477,565 482,559 482,545 490,542 502,542 508,547 520,544 537,539 548,535", 0.5, false)} />
          <path d={shore("198,595 207,607 237,613 245,623 253,628 258,625 262,635 270,641 277,638 283,643 297,637 313,633 322,637 321,645 323,650 313,658", 0.4, false)} />
          <path d={shore("412,524 418,527 430,530 447,538", 0.8, false)} />
          <path d={shore("411,525 418,524 415,529 430,532 446,539", 0.8, false)} />
          <path d={shore("675,622 684,624 678,632 690,620 700,613 686,618 697,608", 1, false)} />
          <path d={shore("652,572 654,565 660,560 668,556 661,564 657,571 652,572", 0.8, false)} strokeWidth="1.300" />
          <path d={shore("580,645 600,642 615,645 595,648 595,656", 0.8, false)} />
          <path d={shore("579,617 583,624 588,628", 0.8, false)} />
          <path d={shore("813,482 830,478 825,486 845,480 842,488 852,475 858,486 864,478 871,487 860,472 866,478", 2, false)} />
          <path d={shore("862,510 875,515 866,524 880,528 868,535 878,540 868,548", 2, false)} />
          <path d={shore("806,560 812,550 818,562 826,552 830,563 840,553", 2, false)} />
          <path d="M822 430l3-3 2 3-2 3zM523 667l3-3v6l-3 2z" />
        </g>
        <path d={shore("236,693 253,688 257,693 250,700 240,697", 1)} fill={land} stroke={ink} strokeWidth=".8" />
        <path d={shore("862,473 870,468 873,475 866,478", 1)} fill={land} stroke={ink} strokeWidth=".8" />
        <g fill="none" stroke="#d3a4d4" strokeWidth="1.600" opacity=".7">
          <path d={shore("399,659 405,651 418,649 425,637 435,627 434,617 437,605 442,594 461,567 467,577 477,574 485,570 495,579 495,633 504,638 506,654", 0.6, false)} />
          <path d="M225 710h33l8-12 7-8 25-22 16-8h84" strokeWidth="2.500" />
          <path d="M350 660l-1 20 1 30 2 25M398 660l-1 18-14 6-4 15-4 14-2 20M411 650l2 68 8 15" strokeWidth="3" strokeDasharray="12 2" />
        </g>
        <g fontFamily="Open Sans, Noto Sans, sans-serif" stroke="#fff" strokeWidth="4" paintOrder="stroke" strokeLinejoin="round">
          <text x="461" y="654.500" textAnchor="middle" fontSize="19" fontWeight="600" fontStyle="italic" letterSpacing="1" fill="#b585b8">ME</text>
          <text x="292" y="741" textAnchor="middle" fontSize="19" fontWeight="600" fontStyle="italic" fill="#b585b8">NY</text>
          <text x="222" y="716" textAnchor="end" fontSize="18" fill="#4c4c4c">onto</text>
        </g>
      </g>
    </g>
  );
}

function ScaleBar() {
  const cells = [[664, 14], [713, 31], [779, 31]];
  return (
    <g>
      <clipPath id="sb"><rect x="643" y="671" width="188" height="48" /></clipPath>
      <g clipPath="url(#sb)" fontFamily="Liberation Sans, Arial, sans-serif" fontSize="10.300" fill="#000" textAnchor="middle">
        <text x="646.500" y="681">200</text>
        <text x="679.500" y="681">0</text>
        <text x="712" y="681">100</text>
        <text x="745" y="681">200</text>
        <text x="778" y="681">300</text>
        <text x="802" y="681" textAnchor="start">400 km</text>
      </g>
      <rect x="645" y="687" width="167" height="10" />
      {cells.map(([x, w]) => <rect key={x} x={x} y="689" width={w} height="5" fill="#fff" />)}
      <rect x="633.500" y="670.500" width="208" height="49" fill="none" stroke="#3a8fcb" />
      <rect x="633.500" y="670.500" width="208" height="49" fill="none" stroke="#3d0a24" strokeDasharray="7 3" />
      {[633.5, 732.5, 831.5].flatMap((x) =>
        [670.5, 690.5, 709.5].filter((y) => !(x === 732.5 && y === 690.5)).map((y) => (
          <rect key={`${x}-${y}`} x={x} y={y} width="9.500" height="9.500" fill="#fff" stroke="#2f86c6" />
        )),
      )}
    </g>
  );
}

const CanvasHolder = styled.div`
  width: 908px;
  padding-left: 1px;
  flex: none;
`;

function ComposerCanvas() {
  const step = 4.95;
  const across = Array.from({ length: 176 }, (_, i) => i - 15).filter((i) => 193.5 + i * step < 1008);
  const down = Array.from({ length: 120 }, (_, i) => i - 8).filter((i) => 223.5 + i * step < 786);
  return (
    <CanvasHolder>
      <svg width="907" height="621" viewBox="103 167 907 621" fontFamily="Liberation Sans, Arial, sans-serif" fontSize="9.200">
        <rect x="103" y="167" width="907" height="621" fill="#ececec" />
        <rect x="115" y="180" width="895" height="608" fill="#d7d7d7" />
        <g shapeRendering="crispEdges" fill="#000">
          {across.map((i) => (
            <rect key={i} x={Math.round(193 + i * step)} y={i % 10 ? 177 : 168} width="1" height={i % 10 ? 3 : 12} />
          ))}
          {down.map((i) => (
            <rect key={i} y={Math.round(223 + i * step)} x={i % 10 ? 112 : 103} height="1" width={i % 10 ? 3 : 12} />
          ))}
          <rect x="986" y="168" width="1" height="12" fill="#f00" />
          <rect x="103" y="588" width="12" height="1" fill="#f00" />
        </g>
        <g fill="#111" letterSpacing="-.5">
          {across.filter((i) => i % 10 === 0).map((i) => <text key={i} x={194.3 + i * step} y="175.500">{i * 2}</text>)}
          {down.filter((i) => i % 10 === 0).map((i) => (
            <text key={i} transform={`translate(110.500 ${224.500 + i * step}) rotate(-90)`} textAnchor="end">{i * 2}</text>
          ))}
        </g>
        <path d="M195 226H935V749H195z" fill="#969696" />
        <rect x="193" y="223" width="736" height="520" fill="#fff" />
        <PrintMap />
        <ScaleBar />
        <path d="M103 787.500h907" stroke="#b5b5b5" />
      </svg>
    </CanvasHolder>
  );
}

/* ---------- menu bar ---------- */

const MenuBar = styled.div`
  display: flex;
  align-items: center;
  height: 23px;
  background: #e9eff5;
  border-bottom: 1px solid #6f7d88;
  color: #333a40;
  font: 500 14px/22px Inter, sans-serif;
`;
const MenuItem = styled.div<{ $w: number; $bold?: boolean }>`
  width: ${(p) => p.$w}px;
  flex: none;
  white-space: nowrap;
  letter-spacing: -0.12px;
  font-weight: ${(p) => (p.$bold ? 700 : 400)};
  -webkit-text-stroke: 0.2px currentColor;
`;
const MenuIcon = styled.div<{ $w: number }>`
  width: ${(p) => p.$w}px;
  flex: none;
  display: flex;
  justify-content: center;
`;
const menus: [string, number][] = [
  ["QGIS", 53], ["Composer", 85], ["Edit", 44], ["View", 49], ["Layout", 62], ["Atlas", 50], ["Settings", 72], ["Window", 70], ["Help", 506],
];

function TopMenu() {
  return (
    <MenuBar>
      <MenuIcon $w={54}><FaApple size={17} /></MenuIcon>
      {menus.map(([t, w], i) => <MenuItem key={t} $w={w} $bold={i === 0}>{t}</MenuItem>)}
      <MenuIcon $w={24}><FaDropbox size={17} /></MenuIcon>
      <MenuIcon $w={36}>
        <svg width="15" height="15" viewBox="0 0 15 15" fill="none" stroke="#333a40" strokeWidth="2"><path d="M5 9h-4v-8h8v4" /><path d="M10 6h4v8h-8v-4" /><path d="M5 5l5 5M6 10h4v-4" /></svg>
      </MenuIcon>
      <MenuIcon $w={24}><History size={18} strokeWidth={1.4} /></MenuIcon>
      <MenuIcon $w={34}><Bluetooth size={17} strokeWidth={1.4} /></MenuIcon>
      <MenuIcon $w={28}><Wifi size={22} strokeWidth={2.5} /></MenuIcon>
      <MenuIcon $w={26}>
        <svg width="10" height="12" viewBox="0 0 10 12" fill="#333a40"><path d="M0 3.500h3l5.500-3.500v12l-5.500-3.500h-3z" /></svg>
      </MenuIcon>
      <MenuIcon $w={48}>
        <svg width="24" height="14" viewBox="0 0 24 14" fill="none" stroke="#333a40"><path d="M7 1h-4q-2 0-2 2v8q0 2 2 2h4M15 1h3q2 0 2 2v8q0 2-2 2h-4" /><path d="M12 1l-6 7h4l-1 5 6-7h-4z" fill="#333a40" stroke="none" /><path d="M22 5v4" strokeWidth="1.500" /></svg>
      </MenuIcon>
      <MenuItem $w={100}>Tue 12:23 PM</MenuItem>
      <MenuIcon $w={24}><Search size={16} strokeWidth={1.7} /></MenuIcon>
      <MenuIcon $w={40}>
        <svg width="18" height="12" viewBox="0 0 18 12" stroke="#333a40" strokeWidth="2"><path d="M0 1h2M4 1h11M0 6h2M4 6h14M0 11h2M4 11h14" /></svg>
      </MenuIcon>
    </MenuBar>
  );
}

/* ---------- form controls ---------- */

const Select = styled.div<{ $w: number }>`
  width: ${(p) => p.$w}px;
  height: 21px;
  display: flex;
  justify-content: space-between;
  padding-left: 8px;
  line-height: 16px;
  background: #fff;
  border: 1px solid #bdbdbd;
  border-right: 0;
  border-radius: 4px;
  color: #000;
`;
const BlueCap = styled.div`
  width: 17px;
  height: 21px;
  margin-top: -1px;
  border-radius: 0 4px 4px 0;
  background: linear-gradient(#6db3f9, #0f77f5);
  display: flex;
  align-items: center;
  justify-content: center;
`;
const Chevrons = ({ color = "#fff" }: { color?: string }) => (
  <svg width="8" height="12" viewBox="0 0 8 12" fill="none" stroke={color} strokeWidth="1.500"><path d="M1 4l3-3 3 3M1 8l3 3 3-3" /></svg>
);
const ChevronDown = ({ color = "#fff" }: { color?: string }) => (
  <svg width="8" height="6" viewBox="0 0 8 6" fill="none" stroke={color} strokeWidth="1.400"><path d="M1 1l3 3.500 3-3.500" /></svg>
);
const Field = styled.div<{ $w: number; $disabled?: boolean; $center?: boolean }>`
  width: ${(p) => p.$w}px;
  height: 21px;
  flex: none;
  display: flex;
  justify-content: ${(p) => (p.$center ? "center" : "space-between")};
  padding: 1px ${(p) => (p.$center ? 5 : 1)}px 1px 2px;
  line-height: 15px;
  background: #fff;
  border: 1px solid ${(p) => (p.$disabled ? "#c9c9c9" : "#b0b0b0")};
  color: ${(p) => (p.$disabled ? "#4a4a4a" : "#000")};
  white-space: nowrap;
`;
const FieldTail = styled.div<{ $w: number }>`
  width: ${(p) => p.$w}px;
  background: #e2e2e2;
  display: flex;
  align-items: center;
  padding-left: 25px;
`;
const StepperBox = styled.div<{ $disabled?: boolean }>`
  width: 13px;
  height: 22px;
  margin-left: 3px;
  flex: none;
  border: 1px solid #c0c0c0;
  border-radius: 6px;
  background: ${(p) => (p.$disabled ? "#eee" : "#fff")};
  display: flex;
  align-items: center;
  justify-content: center;
  opacity: ${(p) => (p.$disabled ? 0.7 : 1)};
  svg { flex: none; transform: scale(0.8, 0.95); }
`;
const Stepper = ({ disabled }: { disabled?: boolean }) => (
  <StepperBox $disabled={disabled}><Chevrons color="#444" /></StepperBox>
);
const ClearMark = () => (
  <svg width="12" height="11" viewBox="0 0 13 12"><path d="M3 0h7q2 0 2 2v8q0 2-2 2h-7l-3-6z" fill="#8d8d8d" /><path d="M4 3l5 6M9 3l-5 6" stroke="#fff" strokeWidth="1.400" /></svg>
);

/* ---------- item properties ---------- */

const Panel = styled.div`
  width: 389px;
  flex: none;
  background: #ebebeb;
  border-left: 2px solid #9c9c9c;
  display: flex;
  flex-direction: column;
`;
const TabRow = styled.div`
  height: 21px;
  flex: none;
  display: flex;
  justify-content: center;
  padding-right: 2px;
  background: linear-gradient(#ebebeb 10px, #cfcfcf 10px, #e3e3e3 11px);
`;
const TabGroup = styled.div`
  display: flex;
  height: 20px;
  background: #fff;
  border: 1px solid #b3b3b3;
  border-top: 0;
  border-radius: 0 0 5px 5px;
`;
const Tab = styled.div<{ $w: number; $on?: boolean }>`
  width: ${(p) => p.$w}px;
  height: 20px;
  text-align: center;
  line-height: 19px;
  color: ${(p) => (p.$on ? "#fff" : "#000")};
  -webkit-text-stroke: ${(p) => (p.$on ? "0.3px #fff" : "0")};
  background: ${(p) => (p.$on ? "linear-gradient(#6cb3fa, #147bf6)" : "none")};
`;
const DockTitle = styled.div`
  height: 26px;
  flex: none;
  display: flex;
  align-items: center;
  padding: 0 2px;
  background: linear-gradient(#efefef, #c9c9c9);
  border-top: 1px solid #fff;
  border-bottom: 1px solid #ababab;
  font-size: 11px;
  line-height: 14px;
  color: #000;
  span { flex: 1; text-align: center; padding-bottom: 1px; }
`;
const CloseDot = () => (
  <svg width="15" height="15" viewBox="0 0 15 15"><circle cx="7.500" cy="7.500" r="7" fill="#4b4b4b" /><path d="M4.500 4.500l6 6M10.500 4.500l-6 6" stroke="#fff" strokeWidth="2.200" /></svg>
);
const ItemName = styled.div`
  height: 18px;
  flex: none;
  background: #c5c5c5;
  border-bottom: 1px solid #8e8e8e;
  padding-left: 4px;
  font-weight: 700;
  line-height: 16px;
`;
const Scroller = styled.div`
  flex: 1;
  min-height: 0;
  display: flex;
  overflow: hidden;
  border-bottom: 1px solid #b1b1b1;
`;
const Groups = styled.div`
  width: 371px;
  padding-left: 11px;
  flex: none;
`;
const Track = styled.div`
  flex: 1;
  margin-left: 1px;
  background: #fafafa;
  padding: 1px 0 0 3px;
`;
const Thumb = styled.div`
  width: 8px;
  height: 317px;
  border-radius: 4px;
  background: #c1c1c1;
`;
const Heading = styled.div<{ $top?: number; $h?: number }>`
  display: flex;
  align-items: center;
  height: ${(p) => p.$h ?? 20}px;
  margin-top: ${(p) => p.$top ?? 0}px;
  padding: 0 0 2px 3px;
  font-weight: 700;
  color: #1a1a1a;
`;
const Arrow = styled.i<{ $closed?: boolean }>`
  flex: none;
  margin: 2px 8px 0 0;
  ${(p) =>
    p.$closed
      ? css`margin-left: 2px; margin-right: 10px; border: 6px solid transparent; border-left: 7px solid #444; border-right: 0;`
      : css`margin-left: 0; border: 5.500px solid transparent; border-top: 7px solid #444; border-bottom: 0;`}
`;
const Box = styled.div<{ $h: number; $pad: number }>`
  width: 349px;
  height: ${(p) => p.$h}px;
  padding: ${(p) => p.$pad}px 0 0 11px;
  background: #e3e3e3;
  border: 1px solid #bcbcbc;
  border-radius: 5px;
`;
const Line = styled.div<{ $gap?: number }>`
  display: flex;
  height: 21px;
  margin-bottom: ${(p) => p.$gap ?? 8}px;
`;
const Label = styled.div<{ $w: number; $low?: boolean }>`
  width: ${(p) => p.$w}px;
  flex: none;
  line-height: ${(p) => (p.$low ? 20 : 18)}px;
  color: #111;
  display: flex;
  white-space: nowrap;
`;
const Radio = styled.i<{ $on?: boolean }>`
  width: 16px;
  height: 16px;
  margin: 4px 4px 0 -1px;
  border-radius: 50%;
  background: #fff;
  border: ${(p) => (p.$on ? "5px solid #3b97f5" : "1px solid #b5b5b5")};
`;
const Check = styled.i`
  width: 14px;
  height: 14px;
  flex: none;
  margin-right: 7px;
  background: #fff;
  border: 1px solid #bbb;
  border-radius: 3px;
`;

const Spin = ({ w, value, clear, disabled }: { w: number; value: string; clear?: boolean; disabled?: boolean }) => (
  <>
    <Field $w={w} $disabled={disabled}>{value}<FieldTail $w={42}>{clear && <ClearMark />}</FieldTail></Field>
    <Stepper disabled={disabled} />
  </>
);
const Choice = ({ w, value }: { w: number; value: string }) => (
  <Select $w={w}>{value}<BlueCap><Chevrons /></BlueCap></Select>
);

function Properties() {
  return (
    <Panel>
      <TabRow>
        <TabGroup>
          <Tab $w={92}>Composition</Tab>
          <Tab $w={113} $on>Item properties</Tab>
          <Tab $w={115}>Atlas generation</Tab>
        </TabGroup>
      </TabRow>
      <DockTitle><CloseDot /><span>Item properties</span></DockTitle>
      <ItemName>Scalebar</ItemName>
      <Scroller>
        <Groups>
          <Heading $h={18}><Arrow />Main properties</Heading>
          <Box $h={70} $pad={11}>
            <Line $gap={5}><Label $w={34}>Map</Label><Choice w={291} value="Map 0" /></Line>
            <Line><Label $w={34}>Style</Label><Choice w={291} value="Single Box" /></Line>
          </Box>
          <Heading $top={10} $h={18}><Arrow />Units</Heading>
          <Box $h={100} $pad={11}>
            <Line $gap={6}><Label $w={117}>Scalebar units</Label><Choice w={208} value="Meters" /></Line>
            <Line $gap={7}><Label $w={119} $low>Label unit multiplier</Label><Spin w={189} value="1000.000000" /></Line>
            <Line><Label $w={118} $low>Label for units</Label><Field $w={207}>km</Field></Line>
          </Box>
          <Heading $top={10} $h={18}><Arrow />Segments</Heading>
          <Box $h={192} $pad={12}>
            <Line><Label $w={134} $low>Segments</Label><Spin w={174} value="left 2" clear /></Line>
            <Line><Label $w={134} /><Spin w={174} value="right 4" clear /></Line>
            <Line><Label $w={134} $low><Radio $on />Fixed width</Label><Spin w={174} value="100000.000000 units" /></Line>
            <Line><Label $w={134} $low><Radio />Fit segment width</Label><Spin w={174} value="min 50 mm" disabled /></Line>
            <Line><Label $w={134} /><Spin w={174} value="max 150 mm" disabled /></Line>
            <Line><Label $w={134} $low>Height</Label><Spin w={174} value="3 mm" /></Line>
          </Box>
          <Heading $top={9}><Arrow $closed />Display</Heading>
          <Heading $top={-1}><Arrow $closed />Fonts and colors</Heading>
          <Heading $top={5}><Arrow $closed />Position and size</Heading>
          <Heading><Arrow $closed />Rotation</Heading>
          <Heading $top={8}><Arrow $closed /><Check />Frame</Heading>
        </Groups>
        <Track><Thumb /></Track>
      </Scroller>
    </Panel>
  );
}

/* ---------- composer window ---------- */

const ComposerWindow = styled.div`
  position: absolute;
  left: 66px;
  top: 109px;
  z-index: 2;
  width: 1333px;
  height: 719px;
  display: flex;
  flex-direction: column;
  border-radius: 5px;
  overflow: hidden;
  background: #ebebeb;
  box-shadow: 0 0 1px rgba(0, 0, 0, 0.6), 0 0 12px rgba(0, 0, 0, 0.15), 0 18px 36px rgba(0, 0, 0, 0.5);
`;
const TitleBar = styled.div<{ $active?: boolean }>`
  height: 22px;
  flex: none;
  display: flex;
  align-items: center;
  padding-left: 8px;
  background: ${(p) => (p.$active ? "linear-gradient(#ebebeb, #d3d3d3)" : "#f6f6f6")};
  border-bottom: 1px solid ${(p) => (p.$active ? "#b0b0b0" : "#d1d1d1")};
  color: ${(p) => (p.$active ? "#474747" : "#b2b2b2")};
  font: 13px/20px Inter, sans-serif;
  letter-spacing: ${(p) => (p.$active ? -0.1 : 0.55)}px;
  span { flex: 1; text-align: center; padding-right: 68px; }
`;
const Light = styled.i<{ $c: string; $ring: string }>`
  width: 12px;
  height: 12px;
  margin-right: 8px;
  border-radius: 50%;
  background: ${(p) => p.$c};
  border: 1px solid ${(p) => p.$ring};
`;
const Row = styled.div`
  flex: 1;
  min-height: 0;
  display: flex;
`;
const PageBox = styled.div`
  width: 103px;
  height: 22px;
  margin-left: 12px;
  flex: none;
  display: flex;
  justify-content: space-between;
  background: #fff;
  border: 1px solid #bbb;
  border-radius: 0 4px 4px 0;
  padding-left: 2px;
  line-height: 18px;
  font-family: "DejaVu Sans", sans-serif;
  font-size: 12px;
`;
const GreyCap = styled.div<{ $solid?: boolean }>`
  width: ${(p) => (p.$solid ? 15 : 18)}px;
  background: ${(p) => (p.$solid ? "#cdcdcd" : "#f1f1f1")};
  display: flex;
  align-items: center;
  justify-content: center;
`;
const More = styled.div`
  flex: 1;
  text-align: right;
  padding-right: 1px;
  font-size: 20px;
  color: #6f6f6f;
`;
const ComposerStatus = styled.div`
  height: 40px;
  flex: none;
  display: flex;
  padding: 8px 1px 0 2px;
  line-height: 22px;
  color: #000;
`;
const Cell = styled.div<{ $w: number; $indent?: number }>`
  width: ${(p) => p.$w}px;
  padding-left: ${(p) => p.$indent ?? 0}px;
  flex: none;
  white-space: nowrap;
`;
const ZoomBox = styled.div`
  width: 94px;
  height: 21px;
  margin-right: 6px;
  display: flex;
  justify-content: space-between;
  padding-left: 2px;
  background: #fff;
  border: 1px solid #bbb;
  border-right: 0;
  border-radius: 0 4px 4px 0;
  line-height: 21px;
`;
const ResizeGrip = styled.div`
  margin-left: auto;
  align-self: flex-end;
`;
const GripLines = () => (
  <svg width="12" height="12" viewBox="0 0 12 12" stroke="#777"><path d="M1 12L12 1M5 12l7-7M9 12l3-3" /></svg>
);

function Composer() {
  return (
    <ComposerWindow>
      <TitleBar $active>
        <Light $c="#fc5b57" $ring="#dd4540" /><Light $c="#fdb843" $ring="#dfa035" /><Light $c="#0bc14c" $ring="#06a83e" />
        <span>Composer 2</span>
      </TitleBar>
      <Strip>
        <Icons items={compTop} start={66} />
        <PageBox>1<GreyCap><ChevronDown color="#777" /></GreyCap></PageBox>
        <Icons items={compTopEnd} start={1219} />
        <More>»</More>
      </Strip>
      <Row>
        <Strip $vertical>
          <Icons items={compLeft} start={167} vertical />
        </Strip>
        <ComposerCanvas />
        <Properties />
      </Row>
      <ComposerStatus>
        <Cell $w={106}>x: 320.361 mm</Cell>
        <Cell $w={106}>y: 147.269 mm</Cell>
        <Cell $w={106}>page: 1</Cell>
        <ZoomBox>35.3%<BlueCap><ChevronDown /></BlueCap></ZoomBox>
        <Cell $w={100}>1 item selected</Cell>
        <ResizeGrip><GripLines /></ResizeGrip>
      </ComposerStatus>
    </ComposerWindow>
  );
}

/* ---------- main window ---------- */

const MainWindow = styled.div`
  height: 873px;
  display: flex;
  flex-direction: column;
  background: #ececec;
  border-radius: 5px;
  overflow: hidden;
`;
const SideStrip = styled(Strip)`
  width: 49px;
  border-right: 2px solid #9f9f9f;
  align-items: flex-start;
  padding-left: 7px;
`;
const LayersDock = styled.div`
  width: 366px;
  flex: none;
  display: flex;
  flex-direction: column;
  background: #fff;
  border-right: 1px solid #8d8d8d;
  border-bottom: 1px solid #999;
`;
const DockHead = styled.div<{ $h: number; $c: string }>`
  height: ${(p) => p.$h}px;
  flex: none;
  background: ${(p) => p.$c};
  border-bottom: 1px solid #a5a5a5;
  display: flex;
  align-items: center;
  padding-left: 2px;
`;
const MapView = styled.div`
  flex: 1;
  border-bottom: 1px solid #9a9a9a;
`;
const StatusBar = styled.div`
  height: 41px;
  flex: none;
  display: flex;
  align-items: center;
  padding-left: 401px;
  background: #ececec;
  color: #000;
`;
const Snap = styled.div`
  width: 19px;
  height: 24px;
  margin-right: 10px;
  border: 1px solid #bbb;
  display: flex;
  align-items: center;
  justify-content: center;
`;
const FlatButton = styled.div<{ $w: number; $gap: number }>`
  width: ${(p) => p.$w}px;
  height: 18px;
  margin-left: ${(p) => p.$gap}px;
  flex: none;
  display: flex;
  align-items: center;
  gap: 4px;
  padding-left: 5px;
  border: 1px solid #c4c4c4;
  white-space: nowrap;
  line-height: 15px;
`;
const ScaleCombo = styled(ZoomBox)`
  width: 118px;
  margin-right: 9px;
`;
const SmallCheck = styled(Check)`
  margin: 2px 4px 0 6px;
  background: #e6e6e6;
  border-color: #bdbdbd;
`;

const reefBlocks: [number, number, number, number, string][] = [
  [1399, 300, 41, 6, "#b9aacb"], [1420, 310, 6, 8, "#b597c6"], [1399, 318, 14, 8, "#aba9ca"], [1407, 330, 14, 6, "#aba3c9"],
  [1421, 332, 8, 12, "#b597c6"], [1421, 344, 7, 6, "#aba9ca"], [1427, 350, 6, 48, "#b0a4ca"], [1434, 330, 6, 12, "#aba9ca"],
  [1399, 406, 29, 6, "#b597c6"], [1414, 411, 20, 7, "#aba9ca"], [1427, 396, 7, 8, "#b0a4ca"],
  [1408, 350, 7, 8, "#d5ddd8"], [1414, 356, 6, 10, "#dde3df"], [1408, 378, 12, 8, "#dde3df"], [1420, 386, 7, 8, "#d5ddd8"],
];

const App = () => (
  <>
    <Global />
    <TopMenu />
    <MainWindow>
      <TitleBar>
        <Light $c="#dcdcdc" $ring="#cfcfcf" /><Light $c="#dcdcdc" $ring="#cfcfcf" /><Light $c="#dcdcdc" $ring="#cfcfcf" />
        <span>QGIS 2.12.1-Lyon</span>
      </TitleBar>
      <Strip><Icons items={row1} start={0} /></Strip>
      <Strip><Icons items={row2} start={0} /></Strip>
      <Strip><Icons items={row3} start={0} /></Strip>
      <Row>
        <SideStrip $vertical>
          <Icons items={leftBar} start={153} vertical />
        </SideStrip>
        <LayersDock>
          <DockHead $h={26} $c="linear-gradient(#e4e4e4, #c6c6c6)"><CloseDot /></DockHead>
          <DockHead $h={28} $c="linear-gradient(#e4e4e4, #c6c6c6)">
            <svg width="20" height="18" viewBox="0 0 20 18" fill="none" stroke="#666"><path d="M4 6h6v10h-6zM7 6v-3h6v10h-3M10 3v-2h6v10h-3" /></svg>
          </DockHead>
          <DockHead $h={10} $c="#ececec" />
          <DockHead $h={21} $c="#c4c4c4" />
        </LayersDock>
        <MapView>
          <svg width="1025" height="701" viewBox="415 153 1025 701">
            <rect x="415" y="153" width="1025" height="701" fill="#b4cfd1" />
            <path d="M1390 153h50v130l-10 14-18 4-22-2z" fill="#92cbc1" />
            {reefBlocks.map(([x, y, w, h, c], i) => <rect key={i} x={x} y={y} width={w} height={h} fill={c} opacity=".75" />)}
            <path d="M1399 299l13 2 2-15 2-2v13l12-2 3-7-3-13 4 8 8-1M1440 300l-15 7 3 4 12-5M1423 300l8-6 9 4" fill="none" stroke="#33403f" />
            <path d="M1438.500 153v701" stroke="#777" opacity=".5" />
            <path d="M416 849h6v5h-6z" fill="#a08bb0" />
          </svg>
        </MapView>
      </Row>
      <StatusBar>
        <Snap>
          <svg width="14" height="18" viewBox="0 0 14 18" fill="#eee" stroke="#222" strokeWidth="1.200"><ellipse cx="5" cy="6" rx="3" ry="4" transform="rotate(-25 5 6)" /><circle cx="8.500" cy="12.500" r="4" /><circle cx="8.500" cy="12.500" r="1.500" /><path d="M3 3l5 8M6 2l4 8M1 13l5-2M13 3l-5 4M2 10l8-1" /></svg>
        </Snap>
        <Cell $w={77}>Coordinate:</Cell>
        <Field $w={300} $center>-7625686,6201816</Field>
        <Cell $w={55} $indent={9}>Scale</Cell>
        <ScaleCombo>1:4,327,930<GreyCap $solid><ChevronDown /></GreyCap></ScaleCombo>
        <Cell $w={62}>Rotation:</Cell>
        <Field $w={89}>0.0<FieldTail $w={44} /></Field>
        <Stepper />
        <SmallCheck />
        <Cell $w={45}>Render</Cell>
        <FlatButton $w={145} $gap={0}>
          <svg width="15" height="15" viewBox="0 0 15 15"><circle cx="7.500" cy="7.500" r="6.500" fill="#999" stroke="#222" strokeWidth="1.800" /><circle cx="7.500" cy="7.500" r="3" fill="#ddd" stroke="#222" strokeWidth="1.500" /><path d="M7.500 0v4M7.500 11v4M0 7.500h4M11 7.500h4" stroke="#222" strokeWidth="1.500" /></svg>
          EPSG:3395 (OTF)
        </FlatButton>
        <FlatButton $w={38} $gap={6}>
          <svg width="17" height="15" viewBox="0 0 17 15"><path d="M8 1q8 0 8 5.500q0 3-2 4l1 4-4-2.500q-11 1-11-5.500q0-5.500 8-5.500z" fill="#555" /><path d="M4 6.500h2M7.500 6.500h2M11 6.500h2" stroke="#fff" strokeWidth="1.800" /></svg>
        </FlatButton>
        <ResizeGrip><GripLines /></ResizeGrip>
      </StatusBar>
    </MainWindow>
    <Composer />
  </>
);

export default App;
